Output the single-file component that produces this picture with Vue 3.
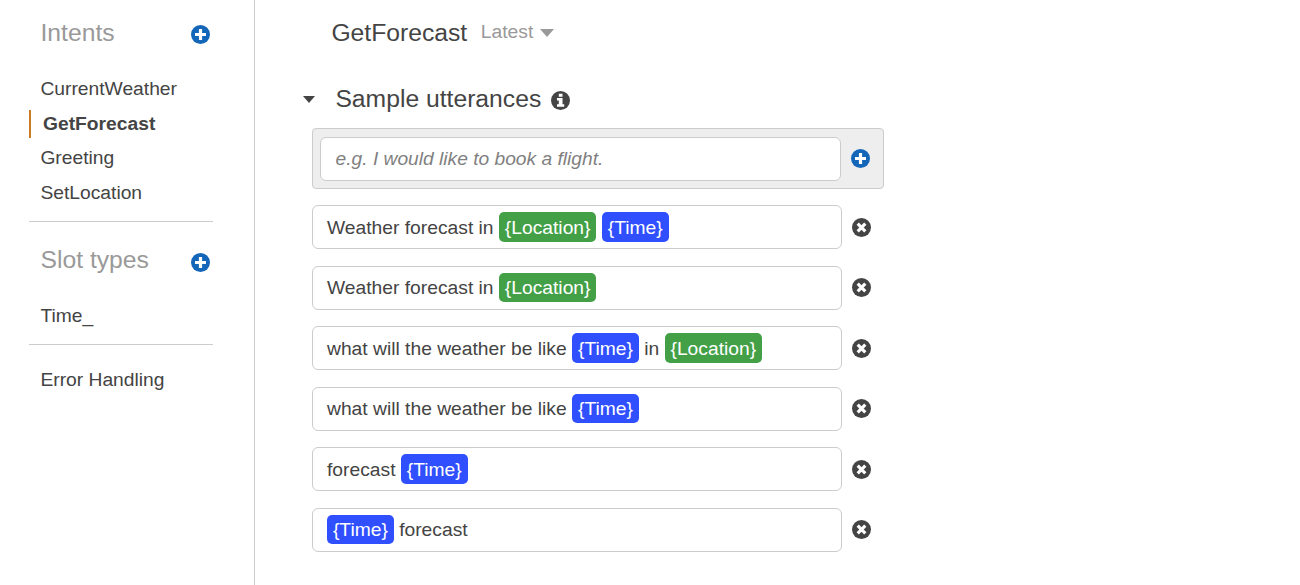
<script setup>
const intents = ['CurrentWeather', 'GetForecast', 'Greeting', 'SetLocation']
const activeIntent = 'GetForecast'

const text = (value) => ({ kind: 'text', value })
const location = { kind: 'location', value: '{Location}' }
const time = { kind: 'time', value: '{Time}' }

const utterances = [
  [text('Weather forecast in '), location, text(' '), time],
  [text('Weather forecast in '), location],
  [text('what will the weather be like '), time, text(' in '), location],
  [text('what will the weather be like '), time],
  [text('forecast '), time],
  [time, text(' forecast')],
]
</script>

<template>
  <div class="page">
    <aside class="sidebar">
      <div class="side-head">
        <h2>Intents</h2>
        <svg class="icon blue" viewBox="0 0 19 19"><circle cx="9.5" cy="9.5" r="9.5" /><path d="M9.5 4v11M4 9.5h11" /></svg>
      </div>
      <ul class="side-list">
        <li v-for="name in intents" :key="name" :class="{ active: name === activeIntent }">{{ name }}</li>
      </ul>
      <hr />
      <div class="side-head second">
        <h2>Slot types</h2>
        <svg class="icon blue" viewBox="0 0 19 19"><circle cx="9.5" cy="9.5" r="9.5" /><path d="M9.5 4v11M4 9.5h11" /></svg>
      </div>
      <ul class="side-list">
        <li>Time_</li>
      </ul>
      <hr />
      <div class="side-link">Error Handling</div>
    </aside>

    <main class="content">
      <header class="title">
        <h1>GetForecast</h1>
        <span class="version">Latest</span>
        <svg class="caret" viewBox="0 0 14 8"><path d="M0 0h14L7 8z" /></svg>
      </header>

      <div class="section">
        <svg class="toggle" viewBox="0 0 12 7"><path d="M0 0h12L6 7z" /></svg>
        <h3>Sample utterances</h3>
        <svg class="icon info" viewBox="0 0 19 19"><circle cx="9.5" cy="9.5" r="9.5" /><path d="M7.8 2.7h3.7v3H7.8zM6 7.1h5.5v6.2h1.7v2.5H6v-2.5h1.8V9.6H6z" /></svg>
      </div>

      <div class="entry">
        <input class="field" type="text" placeholder="e.g. I would like to book a flight." />
        <svg class="icon blue" viewBox="0 0 19 19"><circle cx="9.5" cy="9.5" r="9.5" /><path d="M9.5 4v11M4 9.5h11" /></svg>
      </div>

      <div class="utterances">
        <div v-for="(parts, i) in utterances" :key="i" class="row">
          <div class="utterance"><template v-for="(part, j) in parts" :key="j"><span :class="part.kind">{{ part.value }}</span></template></div>
          <svg class="icon remove" viewBox="0 0 19 19"><circle cx="9.5" cy="9.5" r="9.5" /><path d="M5.7 5.7l7.6 7.6M13.3 5.7l-7.6 7.6" /></svg>
        </div>
      </div>
    </main>
  </div>
</template>

<style>
body { margin: 0; background: #fff; overflow: hidden; }
</style>

<style scoped>
.page {
  display: flex;
  height: 585px;
  overflow: hidden;
  font: 19.25px/28px "Liberation Sans", Arial, sans-serif;
  color: #444;
}
h1, h2, h3 { margin: 0; font-size: 24.7px; line-height: 30px; font-weight: 400; }

.icon { display: block; flex: none; width: 19px; height: 19px; }
.icon path { fill: none; stroke: #fff; stroke-width: 3.2; }
.icon.blue { fill: #1466b8; }
.icon.remove { fill: #444; }
.icon.info { fill: #444; }
.icon.info path { fill: #fff; stroke: none; }

.sidebar {
  box-sizing: border-box;
  flex: none;
  width: 255px;
  padding: 18px 41px 0 29px;
  border-right: 1px solid #ccc;
}
.side-head { display: flex; justify-content: space-between; padding: 0 3px 0 11.5px; }
.side-head h2 { color: #999; }
.side-head .icon { margin-top: 7px; }
.side-head.second { margin-top: 23px; }
.side-head.second .icon { margin-top: 8px; }
.side-list { list-style: none; margin: 27px 0 0; padding: 0; display: grid; gap: 6.65px; }
.side-list li { padding-left: 11.4px; }
.side-list li.active { padding-left: 12px; border-left: 2px solid #c77c22; font-weight: 700; }
hr { height: 1px; margin: 14px 0 0; border: 0; background: #ccc; }
.side-link { margin-top: 21px; padding-left: 11.4px; }

.content { padding: 18px 0 0 47px; }
.title { display: flex; align-items: center; padding-left: 29.4px; }
.version { margin: -2px 0 0 13.6px; color: #999; }
.caret { width: 14px; height: 8px; margin-left: 7px; fill: #999; }
.section { display: flex; align-items: center; margin-top: 36px; }
.toggle { width: 12px; height: 7px; margin: 1px 21px 0 1px; fill: #444; }
.section h3 { margin-left: -0.6px; }
.section .info { margin: 2px 0 0 9.6px; }

.entry {
  box-sizing: border-box;
  display: flex;
  align-items: center;
  width: 572px;
  height: 61px;
  margin: 14px 0 0 10px;
  padding: 0 7px;
  border: 1px solid #ccc;
  border-radius: 4px;
  background: #eee;
}
.field {
  box-sizing: border-box;
  width: 521px;
  height: 44px;
  margin-right: 10px;
  padding: 0 14.6px;
  border: 1px solid #ccc;
  border-radius: 6px;
  background: #fff;
  font: inherit;
  font-size: 19.2px;
  outline: none;
}
.field::placeholder { color: #7f7f7f; font-style: italic; opacity: 1; }

.utterances { display: grid; gap: 16.5px; margin: 16px 0 0 10px; }
.row { display: flex; align-items: center; }
.utterance {
  box-sizing: border-box;
  width: 530px;
  height: 44px;
  margin-right: 10px;
  padding: 0.5px 14px 0;
  border: 1px solid #ccc;
  border-radius: 6px;
  line-height: 42px;
  white-space: pre;
}
.location, .time { padding: 4.3px 5.95px 4px; border-radius: 5px; color: #fff; }
.row:nth-child(odd) .location, .row:nth-child(odd) .time { padding-top: 4.5px; }
.location { background: #43a047; }
.time { background: #304ffe; }
</style>
